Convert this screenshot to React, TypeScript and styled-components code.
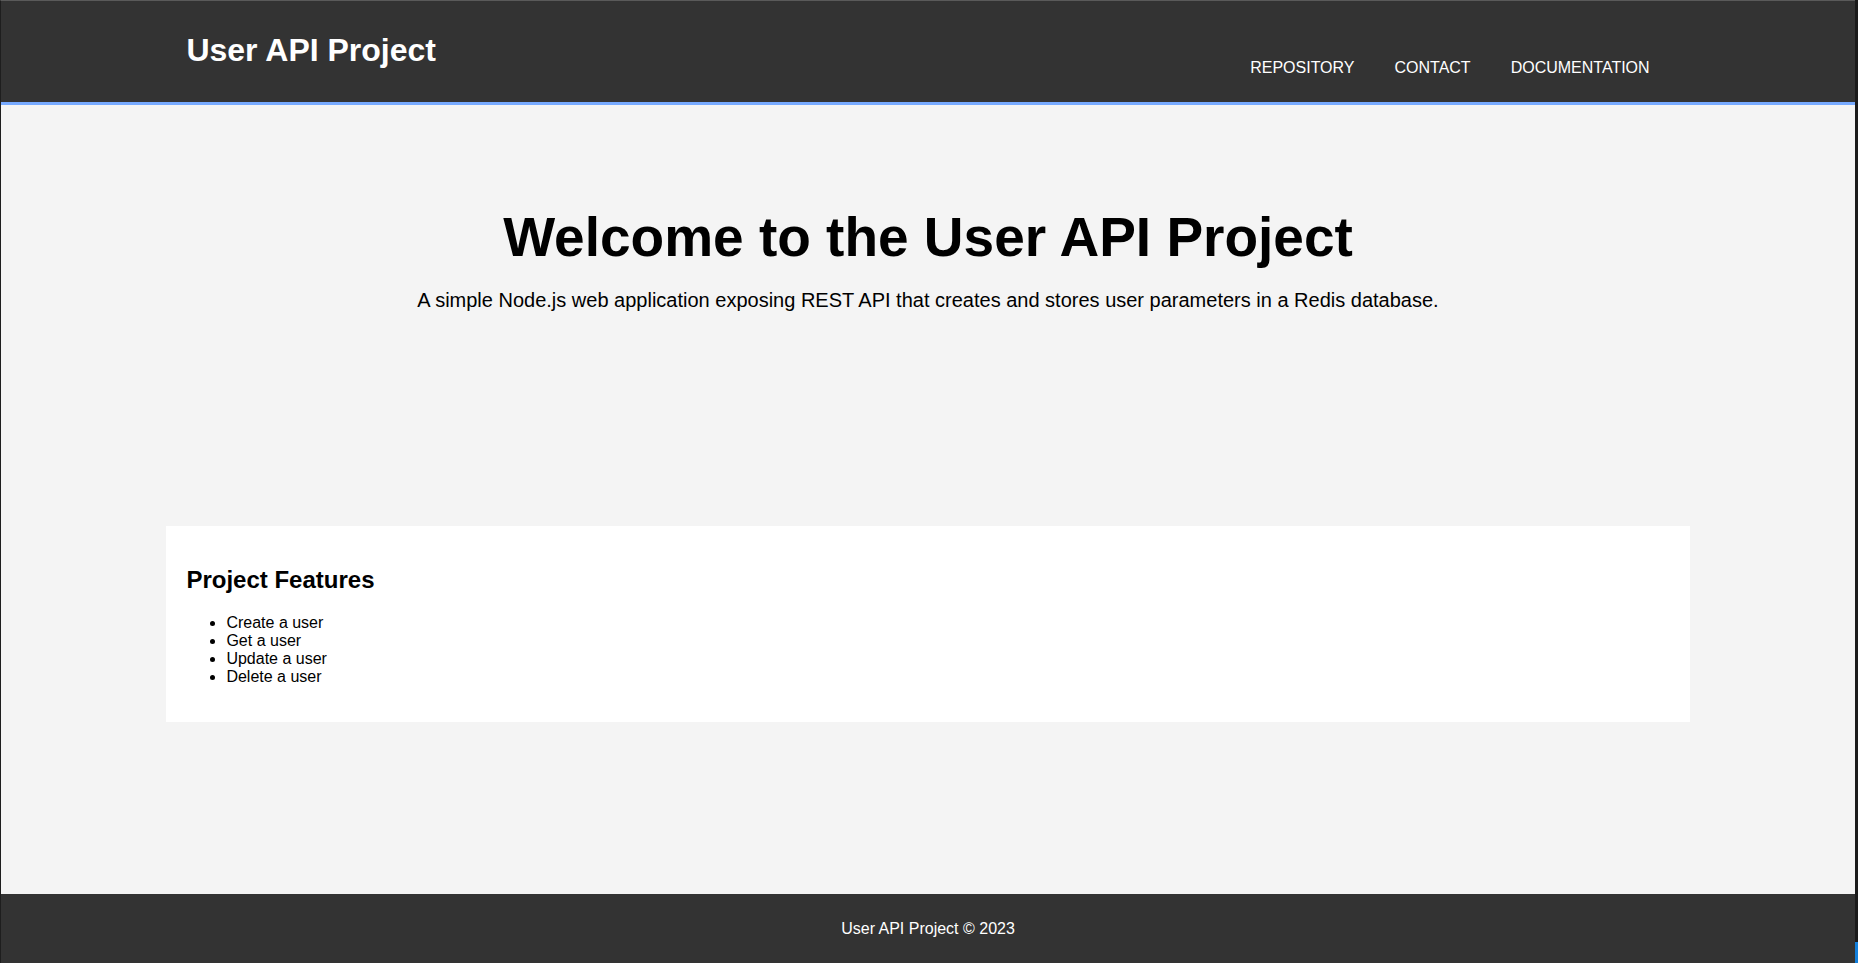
import React from "react";
import styled, { createGlobalStyle } from "styled-components";

const GlobalStyle = createGlobalStyle`
  html, body {
    margin: 0;
    padding: 0;
  }
  body {
    background: #1b1b1b;
    font-family: "Liberation Sans", Arial, Helvetica, sans-serif;
    color: #000;
  }
  * { box-sizing: border-box; }
`;

const Frame = styled.div`
  display: flex;
  flex-direction: column;
  min-height: 100vh;
  width: calc(100% - 3px);
  border-top: 1px solid #5a5a5a;
  border-left: 1px solid #1e1e1e;
  background: #f4f4f4;
`;

const Header = styled.header`
  height: 104px;
  background: #333333;
  border-bottom: 3px solid #77aaff;
  padding-top: 31px;
`;

const Container = styled.div`
  width: 80%;
  margin: 0 auto;
  display: flex;
  justify-content: space-between;
  align-items: flex-start;
`;

const Brand = styled.h1`
  margin: 0;
  font-size: 32px;
  font-weight: bold;
  color: #ffffff;
`;

const Nav = styled.nav`
  display: flex;
  margin-top: 27px;
`;

const NavLink = styled.a`
  padding: 0 20px;
  color: #ffffff;
  font-size: 16px;
  text-transform: uppercase;
  text-decoration: none;
`;

const Main = styled.main`
  flex: 1;
`;

const Hero = styled.section`
  height: 421px;
  padding: 100px 20px 0;
  text-align: center;
`;

const HeroTitle = styled.h1`
  margin: 0 0 20px;
  font-size: 55px;
  font-weight: bold;
`;

const HeroText = styled.p`
  margin: 0;
  font-size: 20px;
`;

const Card = styled.section`
  box-sizing: content-box;
  width: 80%;
  margin: 0 auto;
  padding: 20px;
  background: #ffffff;
`;

const CardTitle = styled.h2`
  margin: 0.83em 0;
  font-size: 24px;
  font-weight: bold;
`;

const FeatureList = styled.ul`
  margin: 16px 0;
  padding-left: 40px;
  font-size: 16px;
`;

const Footer = styled.footer`
  background: #333333;
  color: #ffffff;
  text-align: center;
  font-size: 16px;
  padding: 25.5px 0;
`;

const EdgeMark = styled.div`
  position: fixed;
  right: 0;
  bottom: 0;
  width: 3px;
  height: 21px;
  background: #1380dc;
`;

const links = ["Repository", "Contact", "Documentation"];
const features = ["Create a user", "Get a user", "Update a user", "Delete a user"];

export default function App() {
  return (
    <>
      <GlobalStyle />
      <Frame>
        <Header>
          <Container>
            <Brand>User API Project</Brand>
            <Nav>
              {links.map((l) => (
                <NavLink key={l} href="#">
                  {l}
                </NavLink>
              ))}
            </Nav>
          </Container>
        </Header>
        <Main>
          <Hero>
            <HeroTitle>Welcome to the User API Project</HeroTitle>
            <HeroText>
              A simple Node.js web application exposing REST API that creates and stores user
              parameters in a Redis database.
            </HeroText>
          </Hero>
          <Card>
            <CardTitle>Project Features</CardTitle>
            <FeatureList>
              {features.map((f) => (
                <li key={f}>{f}</li>
              ))}
            </FeatureList>
          </Card>
        </Main>
        <Footer>User API Project © 2023</Footer>
      </Frame>
      <EdgeMark />
    </>
  );
}
